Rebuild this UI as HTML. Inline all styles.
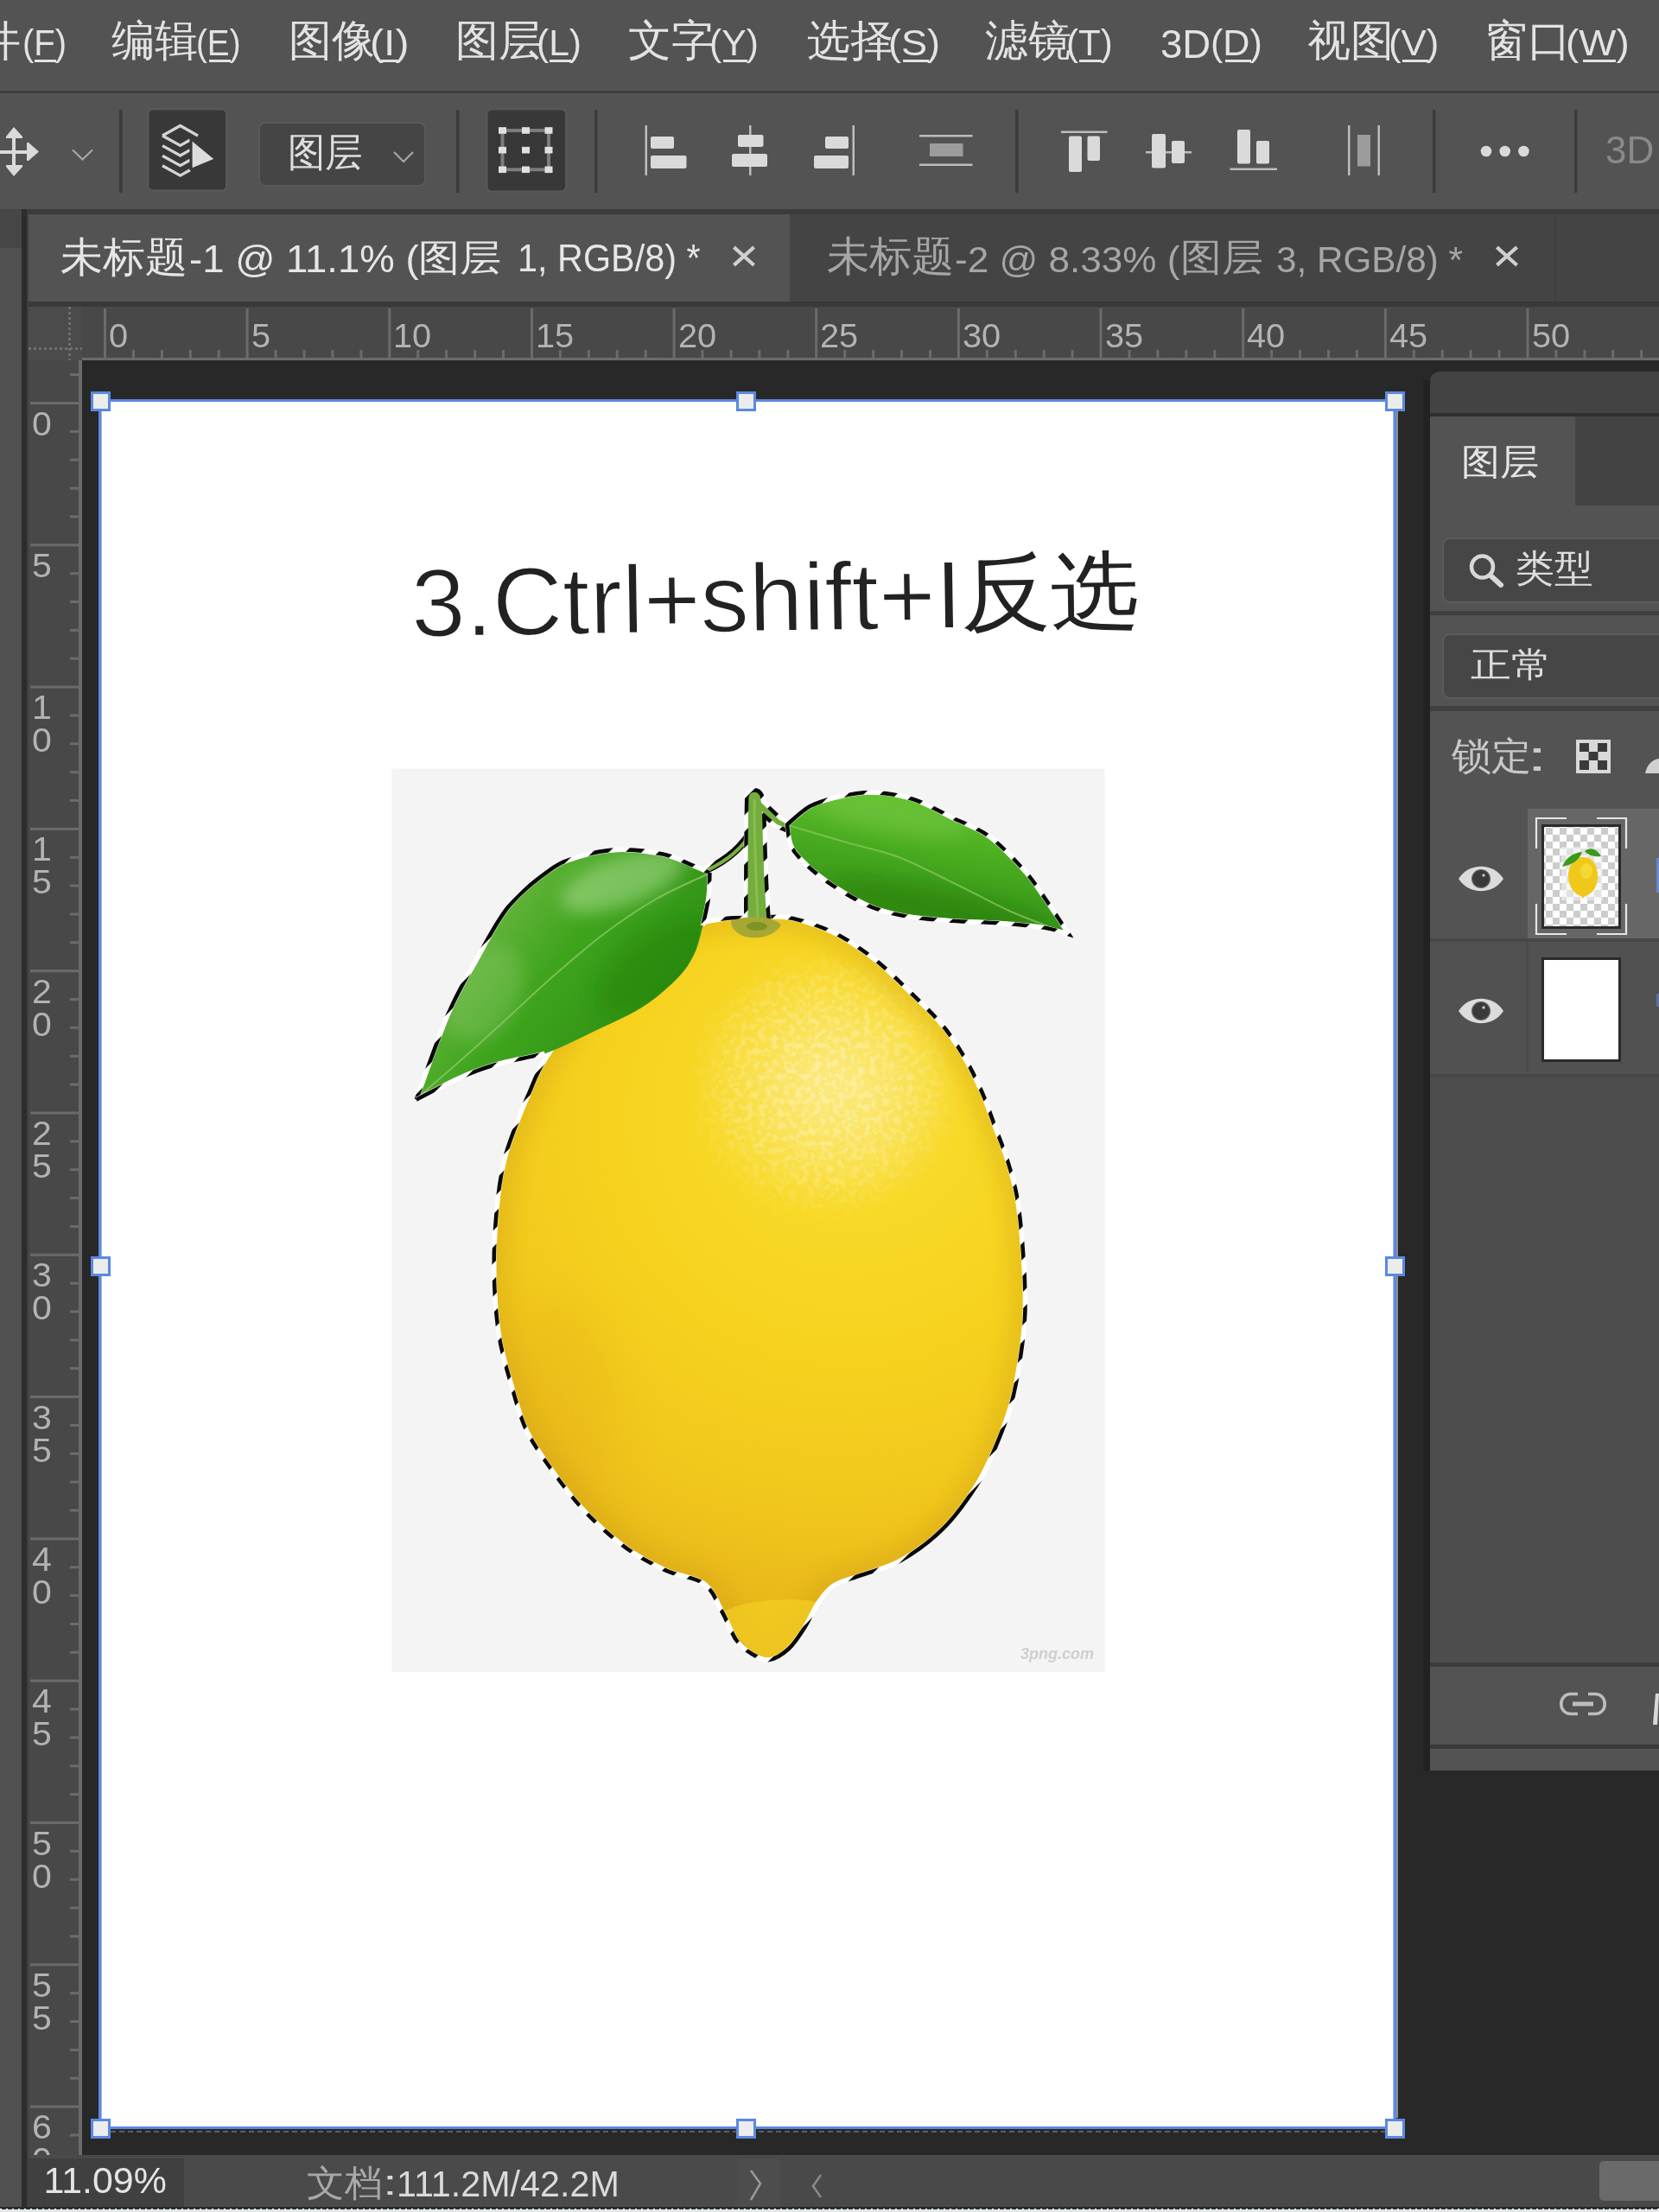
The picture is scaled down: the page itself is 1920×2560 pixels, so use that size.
<!DOCTYPE html>
<html><head><meta charset="utf-8">
<style>
*{margin:0;padding:0;box-sizing:border-box}
html,body{width:1920px;height:2560px;overflow:hidden;background:#535353;font-family:"Liberation Sans",sans-serif}
.a{position:absolute}
.t{position:absolute;white-space:nowrap;line-height:1;transform-origin:0 0}
svg{position:absolute;overflow:visible}
</style></head><body>
<!-- menu bar -->
<div class="a" style="left:0;top:105px;width:1920px;height:3px;background:#3f3f3f"></div>
<!-- tab bar -->
<div class="a" style="left:25px;top:242px;width:1895px;height:6px;background:#3b3b3b"></div>
<div class="a" style="left:0;top:242px;width:25px;height:2313px;background:#505050"></div>
<div class="a" style="left:0;top:242px;width:25px;height:45px;background:#464646"></div>
<div class="a" style="left:25px;top:242px;width:6px;height:2313px;background:#2c2c2c"></div>
<div class="a" style="left:31px;top:248px;width:3px;height:2307px;background:#3e3e3e"></div>
<div class="a" style="left:33px;top:248px;width:1887px;height:101px;background:#444444"></div>
<div class="a" style="left:33px;top:248px;width:881px;height:101px;background:#535353"></div>
<div class="a" style="left:1799px;top:248px;width:2px;height:101px;background:#3f3f3f"></div>
<div class="a" style="left:33px;top:349px;width:1887px;height:6px;background:#393939"></div>
<!-- rulers bg -->
<div class="a" style="left:33px;top:355px;width:1887px;height:62px;background:#484848"></div>
<div class="a" style="left:95px;top:414px;width:1825px;height:3px;background:#6b6b6b"></div>
<div class="a" style="left:33px;top:417px;width:62px;height:2077px;background:#484848"></div>
<div class="a" style="left:91px;top:417px;width:4px;height:2077px;background:#6b6b6b"></div>
<div class="a" style="left:33px;top:355px;width:62px;height:62px;background:#4b4b4b"></div>
<div class="a" style="left:79px;top:355px;width:3px;height:62px;background:repeating-linear-gradient(#6e6e6e 0 3px,transparent 3px 6px)"></div>
<div class="a" style="left:33px;top:402px;width:62px;height:3px;background:repeating-linear-gradient(90deg,#6e6e6e 0 3px,transparent 3px 6px)"></div>
<!-- canvas -->
<div class="a" style="left:95px;top:417px;width:1825px;height:2077px;background:#282828"></div>

<svg class="close-x" style="left:0;top:0" width="1920" height="400" viewBox="0 0 1920 400">
<g stroke="#d0d0d0" stroke-width="4.2" stroke-linecap="square">
<path d="M851 287.5 L871 305.5 M871 287.5 L851 305.5"/>
<path d="M1734 287.5 L1754 305.5 M1754 287.5 L1734 305.5"/>
</g></svg>

<svg style="left:0;top:0" width="1920" height="245" viewBox="0 0 1920 245">
<g fill="#dadada"><rect x="14" y="155" width="4" height="42"/><rect x="-5" y="174" width="40" height="4"/><path d="M16 147 L7 158 L7 160 L26 160 L26 158 Z"/><path d="M16 204 L7 193 L7 191 L26 191 L26 193 Z"/><path d="M45 175.5 L33 165 L31 165 L31 186 L33 186 Z"/></g>
<path d="M84 173.5 L95.5 184.5 L107 173.5" fill="none" stroke="#a8a8a8" stroke-width="2.2"/>
<rect x="138" y="127" width="3.5" height="96" fill="#3b3b3b"/>
<rect x="528" y="127" width="3.5" height="96" fill="#3b3b3b"/>
<rect x="688" y="127" width="3.5" height="96" fill="#3b3b3b"/>
<rect x="1175" y="127" width="3.5" height="96" fill="#3b3b3b"/>
<rect x="1658" y="127" width="3.5" height="96" fill="#3b3b3b"/>
<rect x="1822" y="127" width="3.5" height="96" fill="#3b3b3b"/>
<rect x="171" y="126" width="91.5" height="95" rx="6" fill="#383838" stroke="#575757" stroke-width="3"/>
<g fill="none" stroke="#d4d4d4" stroke-width="3.3" stroke-linejoin="miter">
<path d="M188 157 L208.6 145.5 L229 157"/>
<path d="M188 157.0 L208.6 168.4 L220 162.0"/>
<path d="M188 168.6 L208.6 180.0 L220 173.6"/>
<path d="M188 180.2 L208.6 191.6 L220 185.2"/>
<path d="M188 191.8 L208.6 203.2 L220 196.8"/>
</g>
<path d="M222.4 163.6 L247.2 184 L222.4 194.3 Z" fill="#dcdcdc"/>
<rect x="219.5" y="160" width="2.8" height="37" fill="#383838"/>
<rect x="300" y="142" width="192" height="73" rx="7" fill="#454545" stroke="#595959" stroke-width="2"/>
<path d="M456 176 L467 187 L478 176" fill="none" stroke="#a8a8a8" stroke-width="2.2"/>
<rect x="563" y="126" width="92.5" height="96" rx="6" fill="#383838" stroke="#575757" stroke-width="3"/>
<rect x="581.5" y="151" width="53.5" height="45.3" fill="none" stroke="#7c7c7c" stroke-width="4"/>
<rect x="577.0" y="147.2" width="9" height="7.6" fill="#e0e0e0"/>
<rect x="577.0" y="169.9" width="9" height="7.6" fill="#e0e0e0"/>
<rect x="577.0" y="192.5" width="9" height="7.6" fill="#e0e0e0"/>
<rect x="604.0" y="147.2" width="9" height="7.6" fill="#e0e0e0"/>
<rect x="604.0" y="169.9" width="9" height="7.6" fill="#e0e0e0"/>
<rect x="604.0" y="192.5" width="9" height="7.6" fill="#e0e0e0"/>
<rect x="630.5" y="147.2" width="9" height="7.6" fill="#e0e0e0"/>
<rect x="630.5" y="169.9" width="9" height="7.6" fill="#e0e0e0"/>
<rect x="630.5" y="192.5" width="9" height="7.6" fill="#e0e0e0"/>
<g fill="#dadada">
<rect x="746.5" y="145" width="2.5" height="58" fill="#bdbdbd"/>
<rect x="753" y="158" width="27" height="14" rx="2"/><rect x="753" y="180" width="41.5" height="15" rx="2"/>
<rect x="867" y="145" width="2.5" height="58" fill="#bdbdbd"/>
<rect x="854" y="156" width="29.5" height="14" rx="2"/><rect x="847" y="178" width="41" height="15" rx="2"/>
<rect x="986.5" y="145" width="2.5" height="58" fill="#bdbdbd"/>
<rect x="955" y="158" width="27" height="14" rx="2"/><rect x="942" y="180" width="40" height="15" rx="2"/>
<rect x="1064" y="156" width="61.5" height="2.5" fill="#bdbdbd"/><rect x="1064" y="189.5" width="61.5" height="2.5" fill="#bdbdbd"/>
<rect x="1076" y="166" width="38.5" height="15" fill="#9c9c9c"/>
<rect x="1228" y="151.5" width="53.5" height="2.5" fill="#bdbdbd"/>
<rect x="1237" y="157.5" width="15" height="41.5" rx="2"/><rect x="1258.5" y="157.5" width="14.5" height="28.5" rx="2"/>
<rect x="1326" y="175" width="53" height="2.5" fill="#bdbdbd"/>
<rect x="1333" y="155" width="16" height="39.5" rx="2"/><rect x="1356" y="163" width="15" height="26" rx="2"/>
<rect x="1423.5" y="194.5" width="54.5" height="2.5" fill="#bdbdbd"/>
<rect x="1432" y="150" width="15" height="39.5" rx="2"/><rect x="1454" y="163" width="15" height="26.5" rx="2"/>
<rect x="1560" y="145" width="2.5" height="58" fill="#bdbdbd"/><rect x="1594.5" y="145" width="2.5" height="58" fill="#bdbdbd"/>
<rect x="1571" y="156" width="15" height="36.5" fill="#9c9c9c"/>
<circle cx="1720" cy="175" r="6.3"/>
<circle cx="1741.7" cy="175" r="6.3"/>
<circle cx="1763.4" cy="175" r="6.3"/>
</g>
</svg>
<svg style="left:0;top:0" width="1920" height="2560" viewBox="0 0 1920 2560">
<g fill="#6b6b6b">
<rect x="120.0" y="357" width="3" height="58"/>
<rect x="152.9" y="405" width="3" height="10"/>
<rect x="185.9" y="405" width="3" height="10"/>
<rect x="218.8" y="405" width="3" height="10"/>
<rect x="251.7" y="405" width="3" height="10"/>
<rect x="284.6" y="357" width="3" height="58"/>
<rect x="317.6" y="405" width="3" height="10"/>
<rect x="350.5" y="405" width="3" height="10"/>
<rect x="383.4" y="405" width="3" height="10"/>
<rect x="416.4" y="405" width="3" height="10"/>
<rect x="449.3" y="357" width="3" height="58"/>
<rect x="482.2" y="405" width="3" height="10"/>
<rect x="515.2" y="405" width="3" height="10"/>
<rect x="548.1" y="405" width="3" height="10"/>
<rect x="581.0" y="405" width="3" height="10"/>
<rect x="614.0" y="357" width="3" height="58"/>
<rect x="646.9" y="405" width="3" height="10"/>
<rect x="679.8" y="405" width="3" height="10"/>
<rect x="712.7" y="405" width="3" height="10"/>
<rect x="745.7" y="405" width="3" height="10"/>
<rect x="778.6" y="357" width="3" height="58"/>
<rect x="811.5" y="405" width="3" height="10"/>
<rect x="844.5" y="405" width="3" height="10"/>
<rect x="877.4" y="405" width="3" height="10"/>
<rect x="910.3" y="405" width="3" height="10"/>
<rect x="943.2" y="357" width="3" height="58"/>
<rect x="976.2" y="405" width="3" height="10"/>
<rect x="1009.1" y="405" width="3" height="10"/>
<rect x="1042.0" y="405" width="3" height="10"/>
<rect x="1075.0" y="405" width="3" height="10"/>
<rect x="1107.9" y="357" width="3" height="58"/>
<rect x="1140.8" y="405" width="3" height="10"/>
<rect x="1173.8" y="405" width="3" height="10"/>
<rect x="1206.7" y="405" width="3" height="10"/>
<rect x="1239.6" y="405" width="3" height="10"/>
<rect x="1272.5" y="357" width="3" height="58"/>
<rect x="1305.5" y="405" width="3" height="10"/>
<rect x="1338.4" y="405" width="3" height="10"/>
<rect x="1371.3" y="405" width="3" height="10"/>
<rect x="1404.3" y="405" width="3" height="10"/>
<rect x="1437.2" y="357" width="3" height="58"/>
<rect x="1470.1" y="405" width="3" height="10"/>
<rect x="1503.1" y="405" width="3" height="10"/>
<rect x="1536.0" y="405" width="3" height="10"/>
<rect x="1568.9" y="405" width="3" height="10"/>
<rect x="1601.9" y="357" width="3" height="58"/>
<rect x="1634.8" y="405" width="3" height="10"/>
<rect x="1667.7" y="405" width="3" height="10"/>
<rect x="1700.6" y="405" width="3" height="10"/>
<rect x="1733.6" y="405" width="3" height="10"/>
<rect x="1766.5" y="357" width="3" height="58"/>
<rect x="1799.4" y="405" width="3" height="10"/>
<rect x="1832.4" y="405" width="3" height="10"/>
<rect x="1865.3" y="405" width="3" height="10"/>
<rect x="1898.2" y="405" width="3" height="10"/>
<rect x="81" y="432.1" width="11" height="3"/>
<rect x="35" y="465.0" width="57" height="3"/>
<rect x="81" y="497.9" width="11" height="3"/>
<rect x="81" y="530.7" width="11" height="3"/>
<rect x="81" y="563.6" width="11" height="3"/>
<rect x="81" y="596.4" width="11" height="3"/>
<rect x="35" y="629.3" width="57" height="3"/>
<rect x="81" y="662.2" width="11" height="3"/>
<rect x="81" y="695.0" width="11" height="3"/>
<rect x="81" y="727.9" width="11" height="3"/>
<rect x="81" y="760.7" width="11" height="3"/>
<rect x="35" y="793.6" width="57" height="3"/>
<rect x="81" y="826.5" width="11" height="3"/>
<rect x="81" y="859.3" width="11" height="3"/>
<rect x="81" y="892.2" width="11" height="3"/>
<rect x="81" y="925.0" width="11" height="3"/>
<rect x="35" y="957.9" width="57" height="3"/>
<rect x="81" y="990.8" width="11" height="3"/>
<rect x="81" y="1023.6" width="11" height="3"/>
<rect x="81" y="1056.5" width="11" height="3"/>
<rect x="81" y="1089.3" width="11" height="3"/>
<rect x="35" y="1122.2" width="57" height="3"/>
<rect x="81" y="1155.1" width="11" height="3"/>
<rect x="81" y="1187.9" width="11" height="3"/>
<rect x="81" y="1220.8" width="11" height="3"/>
<rect x="81" y="1253.6" width="11" height="3"/>
<rect x="35" y="1286.5" width="57" height="3"/>
<rect x="81" y="1319.4" width="11" height="3"/>
<rect x="81" y="1352.2" width="11" height="3"/>
<rect x="81" y="1385.1" width="11" height="3"/>
<rect x="81" y="1417.9" width="11" height="3"/>
<rect x="35" y="1450.8" width="57" height="3"/>
<rect x="81" y="1483.7" width="11" height="3"/>
<rect x="81" y="1516.5" width="11" height="3"/>
<rect x="81" y="1549.4" width="11" height="3"/>
<rect x="81" y="1582.2" width="11" height="3"/>
<rect x="35" y="1615.1" width="57" height="3"/>
<rect x="81" y="1648.0" width="11" height="3"/>
<rect x="81" y="1680.8" width="11" height="3"/>
<rect x="81" y="1713.7" width="11" height="3"/>
<rect x="81" y="1746.5" width="11" height="3"/>
<rect x="35" y="1779.4" width="57" height="3"/>
<rect x="81" y="1812.3" width="11" height="3"/>
<rect x="81" y="1845.1" width="11" height="3"/>
<rect x="81" y="1878.0" width="11" height="3"/>
<rect x="81" y="1910.8" width="11" height="3"/>
<rect x="35" y="1943.7" width="57" height="3"/>
<rect x="81" y="1976.6" width="11" height="3"/>
<rect x="81" y="2009.4" width="11" height="3"/>
<rect x="81" y="2042.3" width="11" height="3"/>
<rect x="81" y="2075.1" width="11" height="3"/>
<rect x="35" y="2108.0" width="57" height="3"/>
<rect x="81" y="2140.9" width="11" height="3"/>
<rect x="81" y="2173.7" width="11" height="3"/>
<rect x="81" y="2206.6" width="11" height="3"/>
<rect x="81" y="2239.4" width="11" height="3"/>
<rect x="35" y="2272.3" width="57" height="3"/>
<rect x="81" y="2305.2" width="11" height="3"/>
<rect x="81" y="2338.0" width="11" height="3"/>
<rect x="81" y="2370.9" width="11" height="3"/>
<rect x="81" y="2403.7" width="11" height="3"/>
<rect x="35" y="2436.6" width="57" height="3"/>
<rect x="81" y="2469.5" width="11" height="3"/>
</g></svg>
<div class="t" style="left:126.0px;top:369px;font-size:39px;color:#b3b3b3;transform:scaleX(1.02)">0</div>
<div class="t" style="left:290.6px;top:369px;font-size:39px;color:#b3b3b3;transform:scaleX(1.02)">5</div>
<div class="t" style="left:455.3px;top:369px;font-size:39px;color:#b3b3b3;transform:scaleX(1.02)">10</div>
<div class="t" style="left:620.0px;top:369px;font-size:39px;color:#b3b3b3;transform:scaleX(1.02)">15</div>
<div class="t" style="left:784.6px;top:369px;font-size:39px;color:#b3b3b3;transform:scaleX(1.02)">20</div>
<div class="t" style="left:949.2px;top:369px;font-size:39px;color:#b3b3b3;transform:scaleX(1.02)">25</div>
<div class="t" style="left:1113.9px;top:369px;font-size:39px;color:#b3b3b3;transform:scaleX(1.02)">30</div>
<div class="t" style="left:1278.5px;top:369px;font-size:39px;color:#b3b3b3;transform:scaleX(1.02)">35</div>
<div class="t" style="left:1443.2px;top:369px;font-size:39px;color:#b3b3b3;transform:scaleX(1.02)">40</div>
<div class="t" style="left:1607.9px;top:369px;font-size:39px;color:#b3b3b3;transform:scaleX(1.02)">45</div>
<div class="t" style="left:1772.5px;top:369px;font-size:39px;color:#b3b3b3;transform:scaleX(1.02)">50</div>
<div class="t" style="left:37px;top:471.5px;font-size:38px;color:#b3b3b3;transform:scaleX(1.08)">0</div>
<div class="t" style="left:37px;top:635.8px;font-size:38px;color:#b3b3b3;transform:scaleX(1.08)">5</div>
<div class="t" style="left:37px;top:800.1px;font-size:38px;color:#b3b3b3;transform:scaleX(1.08)">1</div>
<div class="t" style="left:37px;top:838.1px;font-size:38px;color:#b3b3b3;transform:scaleX(1.08)">0</div>
<div class="t" style="left:37px;top:964.4px;font-size:38px;color:#b3b3b3;transform:scaleX(1.08)">1</div>
<div class="t" style="left:37px;top:1002.4px;font-size:38px;color:#b3b3b3;transform:scaleX(1.08)">5</div>
<div class="t" style="left:37px;top:1128.7px;font-size:38px;color:#b3b3b3;transform:scaleX(1.08)">2</div>
<div class="t" style="left:37px;top:1166.7px;font-size:38px;color:#b3b3b3;transform:scaleX(1.08)">0</div>
<div class="t" style="left:37px;top:1293.0px;font-size:38px;color:#b3b3b3;transform:scaleX(1.08)">2</div>
<div class="t" style="left:37px;top:1331.0px;font-size:38px;color:#b3b3b3;transform:scaleX(1.08)">5</div>
<div class="t" style="left:37px;top:1457.3px;font-size:38px;color:#b3b3b3;transform:scaleX(1.08)">3</div>
<div class="t" style="left:37px;top:1495.3px;font-size:38px;color:#b3b3b3;transform:scaleX(1.08)">0</div>
<div class="t" style="left:37px;top:1621.6px;font-size:38px;color:#b3b3b3;transform:scaleX(1.08)">3</div>
<div class="t" style="left:37px;top:1659.6px;font-size:38px;color:#b3b3b3;transform:scaleX(1.08)">5</div>
<div class="t" style="left:37px;top:1785.9px;font-size:38px;color:#b3b3b3;transform:scaleX(1.08)">4</div>
<div class="t" style="left:37px;top:1823.9px;font-size:38px;color:#b3b3b3;transform:scaleX(1.08)">0</div>
<div class="t" style="left:37px;top:1950.2px;font-size:38px;color:#b3b3b3;transform:scaleX(1.08)">4</div>
<div class="t" style="left:37px;top:1988.2px;font-size:38px;color:#b3b3b3;transform:scaleX(1.08)">5</div>
<div class="t" style="left:37px;top:2114.5px;font-size:38px;color:#b3b3b3;transform:scaleX(1.08)">5</div>
<div class="t" style="left:37px;top:2152.5px;font-size:38px;color:#b3b3b3;transform:scaleX(1.08)">0</div>
<div class="t" style="left:37px;top:2278.8px;font-size:38px;color:#b3b3b3;transform:scaleX(1.08)">5</div>
<div class="t" style="left:37px;top:2316.8px;font-size:38px;color:#b3b3b3;transform:scaleX(1.08)">5</div>
<div class="t" style="left:37px;top:2443.1px;font-size:38px;color:#b3b3b3;transform:scaleX(1.08)">6</div>
<div class="t" style="left:37px;top:2481.1px;font-size:38px;color:#b3b3b3;transform:scaleX(1.08)">0</div>
<div class="a" style="left:114px;top:462px;width:1502px;height:2002px;background:#5a89e0"></div>
<div class="a" style="left:117px;top:465px;width:1496px;height:1996px;background:#9bbaf0"></div>
<div class="a" style="left:118px;top:465px;width:1494px;height:1996px;background:#ffffff"></div>
<div class="a" style="left:118px;top:2466px;width:1485px;height:2px;background:repeating-linear-gradient(90deg,#5e5e5e 0 6px,transparent 6px 10px)"></div>
<div class="a" style="left:1616px;top:476px;width:2px;height:1975px;background:#8e8e8e"></div>
<div class="a" style="left:104.5px;top:452.5px;width:23px;height:23px;background:#ececec;border:3px solid #5a89e0"></div>
<div class="a" style="left:104.5px;top:1453.5px;width:23px;height:23px;background:#ececec;border:3px solid #5a89e0"></div>
<div class="a" style="left:104.5px;top:2451.5px;width:23px;height:23px;background:#ececec;border:3px solid #5a89e0"></div>
<div class="a" style="left:852.0px;top:452.5px;width:23px;height:23px;background:#ececec;border:3px solid #5a89e0"></div>
<div class="a" style="left:852.0px;top:2451.5px;width:23px;height:23px;background:#ececec;border:3px solid #5a89e0"></div>
<div class="a" style="left:1602.5px;top:452.5px;width:23px;height:23px;background:#ececec;border:3px solid #5a89e0"></div>
<div class="a" style="left:1602.5px;top:1453.5px;width:23px;height:23px;background:#ececec;border:3px solid #5a89e0"></div>
<div class="a" style="left:1602.5px;top:2451.5px;width:23px;height:23px;background:#ececec;border:3px solid #5a89e0"></div>

<div class="a" style="left:0;top:0;width:1920px;height:2560px;transform:rotate(-0.9deg);transform-origin:899px 695px">
<div class="t" id="doc1" style="left:476.22px;top:636.22px;font-size:111.48px;color:#222222;transform:scaleX(1.0094);-webkit-text-stroke:1.6px #ffffff;">3.Ctrl+shift+I</div><div class="t" id="doc2" style="left:1113.06px;top:641.49px;font-size:98.73px;color:#222222;transform:scaleX(1.0408);">反选</div>
</div>
<svg style="left:0;top:0" width="1920" height="2560" viewBox="0 0 1920 2560">
<defs>
<radialGradient id="lg" cx="960" cy="1330" r="560" fx="1000" fy="1260" gradientUnits="userSpaceOnUse">
<stop offset="0" stop-color="#fae04e"/><stop offset="0.22" stop-color="#f8d928"/><stop offset="0.5" stop-color="#f6d21e"/>
<stop offset="0.78" stop-color="#f1c61c"/><stop offset="1" stop-color="#e6b41a"/></radialGradient>
<radialGradient id="lg2" cx="955" cy="1255" r="150" gradientUnits="userSpaceOnUse">
<stop offset="0" stop-color="#fdf0a0" stop-opacity="0.6"/><stop offset="1" stop-color="#fdf3b0" stop-opacity="0"/></radialGradient>
<linearGradient id="gl" x1="560" y1="1040" x2="760" y2="1190" gradientUnits="userSpaceOnUse">
<stop offset="0" stop-color="#6cb842"/><stop offset="0.45" stop-color="#3ea41c"/><stop offset="1" stop-color="#2e8f14"/></linearGradient>
<linearGradient id="gr" x1="1050" y1="925" x2="1030" y2="1060" gradientUnits="userSpaceOnUse">
<stop offset="0" stop-color="#5fc02a"/><stop offset="0.5" stop-color="#45a81e"/><stop offset="1" stop-color="#368f16"/></linearGradient>
<clipPath id="clipL"><path d="M481.8 1272.6 C487.8 1256.3 506.8 1201.3 518.0 1175.0 C529.2 1148.7 537.3 1135.9 549.0 1115.0 C560.7 1094.1 573.5 1067.8 588.0 1049.8 C602.5 1031.8 622.0 1017.0 635.7 1007.3 C649.4 997.6 656.7 995.4 670.0 991.4 C683.3 987.4 698.9 983.8 715.3 983.4 C731.7 983.0 753.7 985.7 768.3 988.8 C782.9 991.9 793.9 998.5 802.8 1002.0 C811.6 1005.5 818.3 1008.7 821.4 1010.0 C821.2 1014.8 821.3 1028.8 820.0 1039.0 C818.7 1049.2 816.3 1059.9 813.4 1071.0 C810.5 1082.1 808.1 1094.9 802.8 1105.5 C797.5 1116.1 791.8 1124.4 781.6 1134.6 C771.4 1144.8 757.3 1156.8 741.8 1166.5 C726.3 1176.2 707.3 1184.2 688.7 1193.0 C670.1 1201.8 649.5 1213.0 630.4 1219.5 C611.3 1226.0 590.2 1227.4 574.0 1232.0 C557.8 1236.6 548.4 1240.2 533.0 1247.0 C517.6 1253.8 490.3 1268.3 481.8 1272.6Z"/></clipPath>
<clipPath id="clipR"><path d="M911.0 954.3 C915.4 950.8 927.8 938.3 937.5 933.0 C947.2 927.7 957.5 925.1 969.4 922.4 C981.3 919.7 994.4 916.6 1009.0 917.0 C1023.6 917.4 1041.5 920.1 1057.0 925.0 C1072.5 929.9 1087.3 939.1 1102.0 946.3 C1116.7 953.5 1131.0 957.7 1145.0 968.0 C1159.0 978.3 1175.0 995.7 1186.0 1008.0 C1197.0 1020.3 1202.5 1029.7 1211.0 1042.0 C1219.5 1054.3 1232.9 1075.0 1237.3 1081.6 C1232.4 1080.3 1221.7 1075.8 1208.0 1073.6 C1194.3 1071.4 1172.7 1069.6 1155.0 1068.3 C1137.3 1067.0 1119.7 1067.0 1102.0 1065.7 C1084.3 1064.4 1064.5 1063.1 1049.0 1060.4 C1033.5 1057.8 1022.3 1055.1 1009.0 1049.8 C995.7 1044.5 981.3 1036.0 969.4 1028.5 C957.5 1021.0 946.4 1012.7 937.5 1004.7 C928.6 996.8 920.7 989.2 916.3 980.8 C911.9 972.4 911.9 958.7 911.0 954.3Z"/></clipPath>
<clipPath id="clipB"><path d="M876.0 1062.0 C886.8 1061.7 896.1 1060.3 905.0 1061.0 C913.9 1061.7 918.9 1062.6 929.6 1066.0 C940.3 1069.4 955.2 1073.9 969.4 1081.6 C983.5 1089.3 1001.2 1101.6 1014.5 1112.0 C1027.8 1122.4 1036.6 1132.0 1049.0 1144.0 C1061.4 1156.0 1077.7 1171.0 1088.7 1184.0 C1099.8 1197.0 1107.3 1208.7 1115.3 1222.0 C1123.3 1235.3 1130.4 1250.2 1136.5 1264.0 C1142.6 1277.8 1147.2 1292.3 1152.0 1305.0 C1156.8 1317.7 1160.8 1326.7 1165.0 1340.0 C1169.2 1353.3 1173.8 1366.8 1177.0 1385.0 C1180.2 1403.2 1182.4 1427.0 1184.0 1449.0 C1185.6 1471.0 1186.9 1496.7 1186.4 1517.0 C1185.9 1537.3 1183.7 1552.9 1181.0 1571.0 C1178.3 1589.1 1175.2 1607.7 1170.2 1625.4 C1165.2 1643.1 1158.0 1661.2 1151.2 1677.0 C1144.4 1692.8 1139.5 1704.9 1129.5 1720.3 C1119.5 1735.7 1106.0 1754.9 1091.5 1769.2 C1077.0 1783.5 1058.5 1797.0 1042.7 1806.0 C1026.9 1815.0 1009.6 1818.2 996.6 1823.0 C983.6 1827.8 973.3 1829.7 965.0 1835.0 C956.7 1840.3 952.7 1846.8 947.0 1855.0 C941.3 1863.2 936.7 1875.2 931.0 1884.0 C925.3 1892.8 919.8 1901.8 913.0 1908.0 C906.2 1914.2 897.2 1920.0 890.0 1921.0 C882.8 1922.0 876.3 1917.8 870.0 1914.0 C863.7 1910.2 857.7 1906.0 852.0 1898.0 C846.3 1890.0 842.2 1876.8 836.0 1866.0 C829.8 1855.2 825.8 1841.0 815.0 1833.0 C804.2 1825.0 786.4 1824.7 771.4 1817.8 C756.4 1810.9 740.5 1802.9 725.1 1791.8 C709.7 1780.7 692.8 1765.8 678.8 1751.3 C664.8 1736.8 652.8 1720.9 641.2 1705.0 C629.6 1689.1 617.6 1672.7 609.4 1655.8 C601.2 1638.9 597.3 1622.0 592.0 1603.7 C586.7 1585.4 581.0 1567.6 577.6 1545.9 C574.2 1524.2 572.3 1497.7 571.8 1473.6 C571.3 1449.5 572.8 1422.9 574.7 1401.2 C576.6 1379.5 579.5 1360.3 583.4 1343.4 C587.3 1326.5 593.3 1312.6 597.9 1300.0 C602.5 1287.4 605.3 1280.7 611.0 1268.0 C616.7 1255.3 620.5 1242.0 632.0 1224.0 C643.5 1206.0 662.0 1179.8 680.0 1160.0 C698.0 1140.2 720.0 1119.7 740.0 1105.0 C760.0 1090.3 783.3 1079.0 800.0 1072.0 C816.7 1065.0 827.3 1064.7 840.0 1063.0 C852.7 1061.3 865.2 1062.3 876.0 1062.0Z"/></clipPath>
<filter id="blur8" x="-50%" y="-50%" width="200%" height="200%"><feGaussianBlur stdDeviation="10"/></filter>
<filter id="blur20" x="-50%" y="-50%" width="200%" height="200%"><feGaussianBlur stdDeviation="25"/></filter>
<filter id="tex" x="0" y="0" width="100%" height="100%"><feTurbulence type="fractalNoise" baseFrequency="0.14" numOctaves="2" seed="7"/>
<feColorMatrix values="0 0 0 0 1  0 0 0 0 0.96  0 0 0 0 0.72  0 0 0 -3.5 2.0"/></filter>
<radialGradient id="texmask" cx="955" cy="1255" r="165" gradientUnits="userSpaceOnUse"><stop offset="0" stop-color="#fff" stop-opacity="0.9"/><stop offset="0.6" stop-color="#fff" stop-opacity="0.5"/><stop offset="1" stop-color="#fff" stop-opacity="0"/></radialGradient>
<mask id="tm"><rect x="800" y="1040" width="420" height="400" fill="url(#texmask)"/></mask>
<pattern id="ants" x="0" y="0" width="38" height="38" patternUnits="userSpaceOnUse">
<rect width="38" height="38" fill="#ffffff"/><path d="M0 0 L19 0 L0 19 Z M38 0 L38 19 L19 38 L0 38 Z" fill="#0a0a0a"/></pattern>
</defs>
<rect x="453.5" y="889.5" width="825" height="1045.5" fill="#f4f4f4"/>
<path d="M876.0 1062.0 C886.8 1061.7 896.1 1060.3 905.0 1061.0 C913.9 1061.7 918.9 1062.6 929.6 1066.0 C940.3 1069.4 955.2 1073.9 969.4 1081.6 C983.5 1089.3 1001.2 1101.6 1014.5 1112.0 C1027.8 1122.4 1036.6 1132.0 1049.0 1144.0 C1061.4 1156.0 1077.7 1171.0 1088.7 1184.0 C1099.8 1197.0 1107.3 1208.7 1115.3 1222.0 C1123.3 1235.3 1130.4 1250.2 1136.5 1264.0 C1142.6 1277.8 1147.2 1292.3 1152.0 1305.0 C1156.8 1317.7 1160.8 1326.7 1165.0 1340.0 C1169.2 1353.3 1173.8 1366.8 1177.0 1385.0 C1180.2 1403.2 1182.4 1427.0 1184.0 1449.0 C1185.6 1471.0 1186.9 1496.7 1186.4 1517.0 C1185.9 1537.3 1183.7 1552.9 1181.0 1571.0 C1178.3 1589.1 1175.2 1607.7 1170.2 1625.4 C1165.2 1643.1 1158.0 1661.2 1151.2 1677.0 C1144.4 1692.8 1139.5 1704.9 1129.5 1720.3 C1119.5 1735.7 1106.0 1754.9 1091.5 1769.2 C1077.0 1783.5 1058.5 1797.0 1042.7 1806.0 C1026.9 1815.0 1009.6 1818.2 996.6 1823.0 C983.6 1827.8 973.3 1829.7 965.0 1835.0 C956.7 1840.3 952.7 1846.8 947.0 1855.0 C941.3 1863.2 936.7 1875.2 931.0 1884.0 C925.3 1892.8 919.8 1901.8 913.0 1908.0 C906.2 1914.2 897.2 1920.0 890.0 1921.0 C882.8 1922.0 876.3 1917.8 870.0 1914.0 C863.7 1910.2 857.7 1906.0 852.0 1898.0 C846.3 1890.0 842.2 1876.8 836.0 1866.0 C829.8 1855.2 825.8 1841.0 815.0 1833.0 C804.2 1825.0 786.4 1824.7 771.4 1817.8 C756.4 1810.9 740.5 1802.9 725.1 1791.8 C709.7 1780.7 692.8 1765.8 678.8 1751.3 C664.8 1736.8 652.8 1720.9 641.2 1705.0 C629.6 1689.1 617.6 1672.7 609.4 1655.8 C601.2 1638.9 597.3 1622.0 592.0 1603.7 C586.7 1585.4 581.0 1567.6 577.6 1545.9 C574.2 1524.2 572.3 1497.7 571.8 1473.6 C571.3 1449.5 572.8 1422.9 574.7 1401.2 C576.6 1379.5 579.5 1360.3 583.4 1343.4 C587.3 1326.5 593.3 1312.6 597.9 1300.0 C602.5 1287.4 605.3 1280.7 611.0 1268.0 C616.7 1255.3 620.5 1242.0 632.0 1224.0 C643.5 1206.0 662.0 1179.8 680.0 1160.0 C698.0 1140.2 720.0 1119.7 740.0 1105.0 C760.0 1090.3 783.3 1079.0 800.0 1072.0 C816.7 1065.0 827.3 1064.7 840.0 1063.0 C852.7 1061.3 865.2 1062.3 876.0 1062.0Z" fill="url(#lg)"/>
<path d="M876.0 1062.0 C886.8 1061.7 896.1 1060.3 905.0 1061.0 C913.9 1061.7 918.9 1062.6 929.6 1066.0 C940.3 1069.4 955.2 1073.9 969.4 1081.6 C983.5 1089.3 1001.2 1101.6 1014.5 1112.0 C1027.8 1122.4 1036.6 1132.0 1049.0 1144.0 C1061.4 1156.0 1077.7 1171.0 1088.7 1184.0 C1099.8 1197.0 1107.3 1208.7 1115.3 1222.0 C1123.3 1235.3 1130.4 1250.2 1136.5 1264.0 C1142.6 1277.8 1147.2 1292.3 1152.0 1305.0 C1156.8 1317.7 1160.8 1326.7 1165.0 1340.0 C1169.2 1353.3 1173.8 1366.8 1177.0 1385.0 C1180.2 1403.2 1182.4 1427.0 1184.0 1449.0 C1185.6 1471.0 1186.9 1496.7 1186.4 1517.0 C1185.9 1537.3 1183.7 1552.9 1181.0 1571.0 C1178.3 1589.1 1175.2 1607.7 1170.2 1625.4 C1165.2 1643.1 1158.0 1661.2 1151.2 1677.0 C1144.4 1692.8 1139.5 1704.9 1129.5 1720.3 C1119.5 1735.7 1106.0 1754.9 1091.5 1769.2 C1077.0 1783.5 1058.5 1797.0 1042.7 1806.0 C1026.9 1815.0 1009.6 1818.2 996.6 1823.0 C983.6 1827.8 973.3 1829.7 965.0 1835.0 C956.7 1840.3 952.7 1846.8 947.0 1855.0 C941.3 1863.2 936.7 1875.2 931.0 1884.0 C925.3 1892.8 919.8 1901.8 913.0 1908.0 C906.2 1914.2 897.2 1920.0 890.0 1921.0 C882.8 1922.0 876.3 1917.8 870.0 1914.0 C863.7 1910.2 857.7 1906.0 852.0 1898.0 C846.3 1890.0 842.2 1876.8 836.0 1866.0 C829.8 1855.2 825.8 1841.0 815.0 1833.0 C804.2 1825.0 786.4 1824.7 771.4 1817.8 C756.4 1810.9 740.5 1802.9 725.1 1791.8 C709.7 1780.7 692.8 1765.8 678.8 1751.3 C664.8 1736.8 652.8 1720.9 641.2 1705.0 C629.6 1689.1 617.6 1672.7 609.4 1655.8 C601.2 1638.9 597.3 1622.0 592.0 1603.7 C586.7 1585.4 581.0 1567.6 577.6 1545.9 C574.2 1524.2 572.3 1497.7 571.8 1473.6 C571.3 1449.5 572.8 1422.9 574.7 1401.2 C576.6 1379.5 579.5 1360.3 583.4 1343.4 C587.3 1326.5 593.3 1312.6 597.9 1300.0 C602.5 1287.4 605.3 1280.7 611.0 1268.0 C616.7 1255.3 620.5 1242.0 632.0 1224.0 C643.5 1206.0 662.0 1179.8 680.0 1160.0 C698.0 1140.2 720.0 1119.7 740.0 1105.0 C760.0 1090.3 783.3 1079.0 800.0 1072.0 C816.7 1065.0 827.3 1064.7 840.0 1063.0 C852.7 1061.3 865.2 1062.3 876.0 1062.0Z" fill="url(#lg2)"/>
<g clip-path="url(#clipB)"><rect x="800" y="1040" width="420" height="400" filter="url(#tex)" mask="url(#tm)" opacity="0.55"/>
<ellipse cx="640" cy="1640" rx="70" ry="130" fill="#e0a818" opacity="0.25" filter="url(#blur20)"/>
<path d="M876.0 1062.0 C886.8 1061.7 896.1 1060.3 905.0 1061.0 C913.9 1061.7 918.9 1062.6 929.6 1066.0 C940.3 1069.4 955.2 1073.9 969.4 1081.6 C983.5 1089.3 1001.2 1101.6 1014.5 1112.0 C1027.8 1122.4 1036.6 1132.0 1049.0 1144.0 C1061.4 1156.0 1077.7 1171.0 1088.7 1184.0 C1099.8 1197.0 1107.3 1208.7 1115.3 1222.0 C1123.3 1235.3 1130.4 1250.2 1136.5 1264.0 C1142.6 1277.8 1147.2 1292.3 1152.0 1305.0 C1156.8 1317.7 1160.8 1326.7 1165.0 1340.0 C1169.2 1353.3 1173.8 1366.8 1177.0 1385.0 C1180.2 1403.2 1182.4 1427.0 1184.0 1449.0 C1185.6 1471.0 1186.9 1496.7 1186.4 1517.0 C1185.9 1537.3 1183.7 1552.9 1181.0 1571.0 C1178.3 1589.1 1175.2 1607.7 1170.2 1625.4 C1165.2 1643.1 1158.0 1661.2 1151.2 1677.0 C1144.4 1692.8 1139.5 1704.9 1129.5 1720.3 C1119.5 1735.7 1106.0 1754.9 1091.5 1769.2 C1077.0 1783.5 1058.5 1797.0 1042.7 1806.0 C1026.9 1815.0 1009.6 1818.2 996.6 1823.0 C983.6 1827.8 973.3 1829.7 965.0 1835.0 C956.7 1840.3 952.7 1846.8 947.0 1855.0 C941.3 1863.2 936.7 1875.2 931.0 1884.0 C925.3 1892.8 919.8 1901.8 913.0 1908.0 C906.2 1914.2 897.2 1920.0 890.0 1921.0 C882.8 1922.0 876.3 1917.8 870.0 1914.0 C863.7 1910.2 857.7 1906.0 852.0 1898.0 C846.3 1890.0 842.2 1876.8 836.0 1866.0 C829.8 1855.2 825.8 1841.0 815.0 1833.0 C804.2 1825.0 786.4 1824.7 771.4 1817.8 C756.4 1810.9 740.5 1802.9 725.1 1791.8 C709.7 1780.7 692.8 1765.8 678.8 1751.3 C664.8 1736.8 652.8 1720.9 641.2 1705.0 C629.6 1689.1 617.6 1672.7 609.4 1655.8 C601.2 1638.9 597.3 1622.0 592.0 1603.7 C586.7 1585.4 581.0 1567.6 577.6 1545.9 C574.2 1524.2 572.3 1497.7 571.8 1473.6 C571.3 1449.5 572.8 1422.9 574.7 1401.2 C576.6 1379.5 579.5 1360.3 583.4 1343.4 C587.3 1326.5 593.3 1312.6 597.9 1300.0 C602.5 1287.4 605.3 1280.7 611.0 1268.0 C616.7 1255.3 620.5 1242.0 632.0 1224.0 C643.5 1206.0 662.0 1179.8 680.0 1160.0 C698.0 1140.2 720.0 1119.7 740.0 1105.0 C760.0 1090.3 783.3 1079.0 800.0 1072.0 C816.7 1065.0 827.3 1064.7 840.0 1063.0 C852.7 1061.3 865.2 1062.3 876.0 1062.0Z" fill="none" stroke="#c99c12" stroke-width="36" opacity="0.28" filter="url(#blur8)"/></g>
<path d="M836 1866 C860 1850 930 1848 947 1855 C935 1880 920 1905 890 1921 C868 1913 850 1895 836 1866Z" fill="#f3cf22" opacity="0.7"/>
<path d="M876.0 1062.0 C886.8 1061.7 896.1 1060.3 905.0 1061.0 C913.9 1061.7 918.9 1062.6 929.6 1066.0 C940.3 1069.4 955.2 1073.9 969.4 1081.6 C983.5 1089.3 1001.2 1101.6 1014.5 1112.0 C1027.8 1122.4 1036.6 1132.0 1049.0 1144.0 C1061.4 1156.0 1077.7 1171.0 1088.7 1184.0 C1099.8 1197.0 1107.3 1208.7 1115.3 1222.0 C1123.3 1235.3 1130.4 1250.2 1136.5 1264.0 C1142.6 1277.8 1147.2 1292.3 1152.0 1305.0 C1156.8 1317.7 1160.8 1326.7 1165.0 1340.0 C1169.2 1353.3 1173.8 1366.8 1177.0 1385.0 C1180.2 1403.2 1182.4 1427.0 1184.0 1449.0 C1185.6 1471.0 1186.9 1496.7 1186.4 1517.0 C1185.9 1537.3 1183.7 1552.9 1181.0 1571.0 C1178.3 1589.1 1175.2 1607.7 1170.2 1625.4 C1165.2 1643.1 1158.0 1661.2 1151.2 1677.0 C1144.4 1692.8 1139.5 1704.9 1129.5 1720.3 C1119.5 1735.7 1106.0 1754.9 1091.5 1769.2 C1077.0 1783.5 1058.5 1797.0 1042.7 1806.0 C1026.9 1815.0 1009.6 1818.2 996.6 1823.0 C983.6 1827.8 973.3 1829.7 965.0 1835.0 C956.7 1840.3 952.7 1846.8 947.0 1855.0 C941.3 1863.2 936.7 1875.2 931.0 1884.0 C925.3 1892.8 919.8 1901.8 913.0 1908.0 C906.2 1914.2 897.2 1920.0 890.0 1921.0 C882.8 1922.0 876.3 1917.8 870.0 1914.0 C863.7 1910.2 857.7 1906.0 852.0 1898.0 C846.3 1890.0 842.2 1876.8 836.0 1866.0 C829.8 1855.2 825.8 1841.0 815.0 1833.0 C804.2 1825.0 786.4 1824.7 771.4 1817.8 C756.4 1810.9 740.5 1802.9 725.1 1791.8 C709.7 1780.7 692.8 1765.8 678.8 1751.3 C664.8 1736.8 652.8 1720.9 641.2 1705.0 C629.6 1689.1 617.6 1672.7 609.4 1655.8 C601.2 1638.9 597.3 1622.0 592.0 1603.7 C586.7 1585.4 581.0 1567.6 577.6 1545.9 C574.2 1524.2 572.3 1497.7 571.8 1473.6 C571.3 1449.5 572.8 1422.9 574.7 1401.2 C576.6 1379.5 579.5 1360.3 583.4 1343.4 C587.3 1326.5 593.3 1312.6 597.9 1300.0 C602.5 1287.4 605.3 1280.7 611.0 1268.0 C616.7 1255.3 620.5 1242.0 632.0 1224.0 C643.5 1206.0 662.0 1179.8 680.0 1160.0 C698.0 1140.2 720.0 1119.7 740.0 1105.0 C760.0 1090.3 783.3 1079.0 800.0 1072.0 C816.7 1065.0 827.3 1064.7 840.0 1063.0 C852.7 1061.3 865.2 1062.3 876.0 1062.0Z" fill="none" stroke="#ffffff" stroke-width="5.5"/>
<path d="M876.0 1062.0 C886.8 1061.7 896.1 1060.3 905.0 1061.0 C913.9 1061.7 918.9 1062.6 929.6 1066.0 C940.3 1069.4 955.2 1073.9 969.4 1081.6 C983.5 1089.3 1001.2 1101.6 1014.5 1112.0 C1027.8 1122.4 1036.6 1132.0 1049.0 1144.0 C1061.4 1156.0 1077.7 1171.0 1088.7 1184.0 C1099.8 1197.0 1107.3 1208.7 1115.3 1222.0 C1123.3 1235.3 1130.4 1250.2 1136.5 1264.0 C1142.6 1277.8 1147.2 1292.3 1152.0 1305.0 C1156.8 1317.7 1160.8 1326.7 1165.0 1340.0 C1169.2 1353.3 1173.8 1366.8 1177.0 1385.0 C1180.2 1403.2 1182.4 1427.0 1184.0 1449.0 C1185.6 1471.0 1186.9 1496.7 1186.4 1517.0 C1185.9 1537.3 1183.7 1552.9 1181.0 1571.0 C1178.3 1589.1 1175.2 1607.7 1170.2 1625.4 C1165.2 1643.1 1158.0 1661.2 1151.2 1677.0 C1144.4 1692.8 1139.5 1704.9 1129.5 1720.3 C1119.5 1735.7 1106.0 1754.9 1091.5 1769.2 C1077.0 1783.5 1058.5 1797.0 1042.7 1806.0 C1026.9 1815.0 1009.6 1818.2 996.6 1823.0 C983.6 1827.8 973.3 1829.7 965.0 1835.0 C956.7 1840.3 952.7 1846.8 947.0 1855.0 C941.3 1863.2 936.7 1875.2 931.0 1884.0 C925.3 1892.8 919.8 1901.8 913.0 1908.0 C906.2 1914.2 897.2 1920.0 890.0 1921.0 C882.8 1922.0 876.3 1917.8 870.0 1914.0 C863.7 1910.2 857.7 1906.0 852.0 1898.0 C846.3 1890.0 842.2 1876.8 836.0 1866.0 C829.8 1855.2 825.8 1841.0 815.0 1833.0 C804.2 1825.0 786.4 1824.7 771.4 1817.8 C756.4 1810.9 740.5 1802.9 725.1 1791.8 C709.7 1780.7 692.8 1765.8 678.8 1751.3 C664.8 1736.8 652.8 1720.9 641.2 1705.0 C629.6 1689.1 617.6 1672.7 609.4 1655.8 C601.2 1638.9 597.3 1622.0 592.0 1603.7 C586.7 1585.4 581.0 1567.6 577.6 1545.9 C574.2 1524.2 572.3 1497.7 571.8 1473.6 C571.3 1449.5 572.8 1422.9 574.7 1401.2 C576.6 1379.5 579.5 1360.3 583.4 1343.4 C587.3 1326.5 593.3 1312.6 597.9 1300.0 C602.5 1287.4 605.3 1280.7 611.0 1268.0 C616.7 1255.3 620.5 1242.0 632.0 1224.0 C643.5 1206.0 662.0 1179.8 680.0 1160.0 C698.0 1140.2 720.0 1119.7 740.0 1105.0 C760.0 1090.3 783.3 1079.0 800.0 1072.0 C816.7 1065.0 827.3 1064.7 840.0 1063.0 C852.7 1061.3 865.2 1062.3 876.0 1062.0Z" fill="none" stroke="url(#ants)" stroke-width="4.6"/>
<path d="M867 966 C855 984 835 1000 809 1010" fill="none" stroke="url(#ants)" stroke-width="9"/>
<path d="M867 968 C855 985 835 1001 809 1011" fill="none" stroke="#78b040" stroke-width="4"/>
<path d="M865.5 1064 C865.5 1010 865.5 960 866.5 923 C867 916 876 914 879.5 921 L881 929 L902 949 L914 955.5 L910 958.5 L899 954 L882 939 C883 980 884.5 1030 887.5 1064 Z" fill="none" stroke="#ffffff" stroke-width="10"/>
<path d="M865.5 1064 C865.5 1010 865.5 960 866.5 923 C867 916 876 914 879.5 921 L881 929 L902 949 L914 955.5 L910 958.5 L899 954 L882 939 C883 980 884.5 1030 887.5 1064 Z" fill="none" stroke="url(#ants)" stroke-width="9"/>
<path d="M865.5 1064 C865.5 1010 865.5 960 866.5 923 C867 916 876 914 879.5 921 L881 929 L902 949 L914 955.5 L910 958.5 L899 954 L882 939 C883 980 884.5 1030 887.5 1064 Z" fill="#72ad3e"/>
<path d="M873 925 C873 970 875 1020 877 1062" stroke="#a0d060" stroke-width="3" fill="none" opacity="0.5"/>
<path d="M846 1066 C860 1060 892 1058 904 1070 C898 1082 880 1088 862 1084 C852 1080 846 1074 846 1066Z" fill="#a6a834"/>
<ellipse cx="876" cy="1072" rx="12" ry="5" fill="#7e9226"/>
<path d="M481.8 1272.6 C487.8 1256.3 506.8 1201.3 518.0 1175.0 C529.2 1148.7 537.3 1135.9 549.0 1115.0 C560.7 1094.1 573.5 1067.8 588.0 1049.8 C602.5 1031.8 622.0 1017.0 635.7 1007.3 C649.4 997.6 656.7 995.4 670.0 991.4 C683.3 987.4 698.9 983.8 715.3 983.4 C731.7 983.0 753.7 985.7 768.3 988.8 C782.9 991.9 793.9 998.5 802.8 1002.0 C811.6 1005.5 818.3 1008.7 821.4 1010.0 C821.2 1014.8 821.3 1028.8 820.0 1039.0 C818.7 1049.2 816.3 1059.9 813.4 1071.0 C810.5 1082.1 808.1 1094.9 802.8 1105.5 C797.5 1116.1 791.8 1124.4 781.6 1134.6 C771.4 1144.8 757.3 1156.8 741.8 1166.5 C726.3 1176.2 707.3 1184.2 688.7 1193.0 C670.1 1201.8 649.5 1213.0 630.4 1219.5 C611.3 1226.0 590.2 1227.4 574.0 1232.0 C557.8 1236.6 548.4 1240.2 533.0 1247.0 C517.6 1253.8 490.3 1268.3 481.8 1272.6Z" fill="url(#gl)"/>
<g clip-path="url(#clipL)" filter="url(#blur8)">
<ellipse cx="720" cy="1020" rx="75" ry="28" transform="rotate(-20 720 1020)" fill="#c8e8b0" opacity="0.45"/>
<ellipse cx="560" cy="1150" rx="40" ry="60" transform="rotate(30 560 1150)" fill="#90cc70" opacity="0.35"/>
<ellipse cx="760" cy="1120" rx="80" ry="40" transform="rotate(-35 760 1120)" fill="#1f7a0c" opacity="0.35"/>
</g>
<path d="M818.0 1012.0 C808.3 1016.7 779.7 1028.7 760.0 1040.0 C740.3 1051.3 720.0 1065.0 700.0 1080.0 C680.0 1095.0 660.0 1112.5 640.0 1130.0 C620.0 1147.5 598.3 1168.3 580.0 1185.0 C561.7 1201.7 545.7 1216.2 530.0 1230.0 C514.3 1243.8 493.3 1261.7 486.0 1268.0" fill="none" stroke="#8cc66a" stroke-width="2" opacity="0.8"/>
<path d="M481.8 1272.6 C487.8 1256.3 506.8 1201.3 518.0 1175.0 C529.2 1148.7 537.3 1135.9 549.0 1115.0 C560.7 1094.1 573.5 1067.8 588.0 1049.8 C602.5 1031.8 622.0 1017.0 635.7 1007.3 C649.4 997.6 656.7 995.4 670.0 991.4 C683.3 987.4 698.9 983.8 715.3 983.4 C731.7 983.0 753.7 985.7 768.3 988.8 C782.9 991.9 793.9 998.5 802.8 1002.0 C811.6 1005.5 818.3 1008.7 821.4 1010.0" fill="none" stroke="#ffffff" stroke-width="5.5"/>
<path d="M481.8 1272.6 C487.8 1256.3 506.8 1201.3 518.0 1175.0 C529.2 1148.7 537.3 1135.9 549.0 1115.0 C560.7 1094.1 573.5 1067.8 588.0 1049.8 C602.5 1031.8 622.0 1017.0 635.7 1007.3 C649.4 997.6 656.7 995.4 670.0 991.4 C683.3 987.4 698.9 983.8 715.3 983.4 C731.7 983.0 753.7 985.7 768.3 988.8 C782.9 991.9 793.9 998.5 802.8 1002.0 C811.6 1005.5 818.3 1008.7 821.4 1010.0" fill="none" stroke="url(#ants)" stroke-width="4.6"/>
<path d="M821.4 1010.0 C821.2 1014.8 821.3 1028.8 820.0 1039.0 C818.7 1049.2 814.5 1065.7 813.4 1071.0" fill="none" stroke="#ffffff" stroke-width="5.5"/>
<path d="M821.4 1010.0 C821.2 1014.8 821.3 1028.8 820.0 1039.0 C818.7 1049.2 814.5 1065.7 813.4 1071.0" fill="none" stroke="url(#ants)" stroke-width="4.6"/>
<path d="M630.4 1219.5 C621.0 1221.6 590.2 1227.4 574.0 1232.0 C557.8 1236.6 548.4 1240.2 533.0 1247.0 C517.6 1253.8 490.3 1268.3 481.8 1272.6" fill="none" stroke="#ffffff" stroke-width="5.5"/>
<path d="M630.4 1219.5 C621.0 1221.6 590.2 1227.4 574.0 1232.0 C557.8 1236.6 548.4 1240.2 533.0 1247.0 C517.6 1253.8 490.3 1268.3 481.8 1272.6" fill="none" stroke="url(#ants)" stroke-width="4.6"/>
<path d="M911.0 954.3 C915.4 950.8 927.8 938.3 937.5 933.0 C947.2 927.7 957.5 925.1 969.4 922.4 C981.3 919.7 994.4 916.6 1009.0 917.0 C1023.6 917.4 1041.5 920.1 1057.0 925.0 C1072.5 929.9 1087.3 939.1 1102.0 946.3 C1116.7 953.5 1131.0 957.7 1145.0 968.0 C1159.0 978.3 1175.0 995.7 1186.0 1008.0 C1197.0 1020.3 1202.5 1029.7 1211.0 1042.0 C1219.5 1054.3 1232.9 1075.0 1237.3 1081.6 C1232.4 1080.3 1221.7 1075.8 1208.0 1073.6 C1194.3 1071.4 1172.7 1069.6 1155.0 1068.3 C1137.3 1067.0 1119.7 1067.0 1102.0 1065.7 C1084.3 1064.4 1064.5 1063.1 1049.0 1060.4 C1033.5 1057.8 1022.3 1055.1 1009.0 1049.8 C995.7 1044.5 981.3 1036.0 969.4 1028.5 C957.5 1021.0 946.4 1012.7 937.5 1004.7 C928.6 996.8 920.7 989.2 916.3 980.8 C911.9 972.4 911.9 958.7 911.0 954.3Z" fill="url(#gr)"/>
<g clip-path="url(#clipR)" filter="url(#blur8)">
<ellipse cx="1090" cy="1050" rx="130" ry="22" transform="rotate(12 1090 1050)" fill="#1f720c" opacity="0.35"/>
<ellipse cx="1030" cy="945" rx="90" ry="20" transform="rotate(10 1030 945)" fill="#8fd060" opacity="0.3"/>
</g>
<path d="M912.0 955.0 C923.3 958.3 958.7 968.8 980.0 975.0 C1001.3 981.2 1018.3 983.7 1040.0 992.0 C1061.7 1000.3 1088.3 1014.5 1110.0 1025.0 C1131.7 1035.5 1149.3 1045.8 1170.0 1055.0 C1190.7 1064.2 1223.3 1075.8 1234.0 1080.0" fill="none" stroke="#86c25e" stroke-width="2" opacity="0.8"/>
<path d="M911.0 954.3 C915.4 950.8 927.8 938.3 937.5 933.0 C947.2 927.7 957.5 925.1 969.4 922.4 C981.3 919.7 994.4 916.6 1009.0 917.0 C1023.6 917.4 1041.5 920.1 1057.0 925.0 C1072.5 929.9 1087.3 939.1 1102.0 946.3 C1116.7 953.5 1131.0 957.7 1145.0 968.0 C1159.0 978.3 1175.0 995.7 1186.0 1008.0 C1197.0 1020.3 1202.5 1029.7 1211.0 1042.0 C1219.5 1054.3 1232.9 1075.0 1237.3 1081.6 C1232.4 1080.3 1221.7 1075.8 1208.0 1073.6 C1194.3 1071.4 1172.7 1069.6 1155.0 1068.3 C1137.3 1067.0 1119.7 1067.0 1102.0 1065.7 C1084.3 1064.4 1064.5 1063.1 1049.0 1060.4 C1033.5 1057.8 1022.3 1055.1 1009.0 1049.8 C995.7 1044.5 981.3 1036.0 969.4 1028.5 C957.5 1021.0 946.4 1012.7 937.5 1004.7 C928.6 996.8 920.7 989.2 916.3 980.8 C911.9 972.4 911.9 958.7 911.0 954.3Z" fill="none" stroke="#ffffff" stroke-width="5.5"/>
<path d="M911.0 954.3 C915.4 950.8 927.8 938.3 937.5 933.0 C947.2 927.7 957.5 925.1 969.4 922.4 C981.3 919.7 994.4 916.6 1009.0 917.0 C1023.6 917.4 1041.5 920.1 1057.0 925.0 C1072.5 929.9 1087.3 939.1 1102.0 946.3 C1116.7 953.5 1131.0 957.7 1145.0 968.0 C1159.0 978.3 1175.0 995.7 1186.0 1008.0 C1197.0 1020.3 1202.5 1029.7 1211.0 1042.0 C1219.5 1054.3 1232.9 1075.0 1237.3 1081.6 C1232.4 1080.3 1221.7 1075.8 1208.0 1073.6 C1194.3 1071.4 1172.7 1069.6 1155.0 1068.3 C1137.3 1067.0 1119.7 1067.0 1102.0 1065.7 C1084.3 1064.4 1064.5 1063.1 1049.0 1060.4 C1033.5 1057.8 1022.3 1055.1 1009.0 1049.8 C995.7 1044.5 981.3 1036.0 969.4 1028.5 C957.5 1021.0 946.4 1012.7 937.5 1004.7 C928.6 996.8 920.7 989.2 916.3 980.8 C911.9 972.4 911.9 958.7 911.0 954.3Z" fill="none" stroke="url(#ants)" stroke-width="4.6"/>
<text x="1181" y="1920" font-family="Liberation Sans" font-style="italic" font-weight="bold" font-size="18" fill="#cfcfcf" textLength="85" lengthAdjust="spacingAndGlyphs">3png.com</text>
</svg>
<div class="a" style="left:1647px;top:440px;width:10px;height:1609px;background:#222222"></div>
<div class="a" style="left:1655px;top:430px;width:265px;height:1619px;background:#535353;border-top-left-radius:12px"></div>
<div class="a" style="left:1655px;top:430px;width:265px;height:48px;background:#434343;border-top-left-radius:12px"></div>
<div class="a" style="left:1655px;top:478px;width:265px;height:4px;background:#2f2f2f"></div>
<div class="a" style="left:1823px;top:482px;width:97px;height:103px;background:#434343"></div>
<div class="a" style="left:1669px;top:622px;width:260px;height:76px;background:#464646;border:2px solid #5c5c5c;border-radius:9px"></div>
<div class="a" style="left:1655px;top:707px;width:265px;height:5px;background:#3f3f3f"></div>
<div class="a" style="left:1669px;top:733px;width:260px;height:76px;background:#464646;border:2px solid #5c5c5c;border-radius:9px"></div>
<div class="a" style="left:1655px;top:817px;width:265px;height:6px;background:#3f3f3f"></div>
<div class="a" style="left:1768px;top:936px;width:152px;height:150px;background:#666666"></div>
<div class="a" style="left:1655px;top:1086px;width:265px;height:4px;background:#474747"></div>
<div class="a" style="left:1655px;top:1090px;width:265px;height:153px;background:#515151"></div>
<div class="a" style="left:1767px;top:1090px;width:2px;height:153px;background:#4a4a4a"></div>
<div class="a" style="left:1655px;top:1243px;width:265px;height:4px;background:#474747"></div>
<div class="a" style="left:1655px;top:1247px;width:265px;height:677px;background:#4d4d4d"></div>
<div class="a" style="left:1655px;top:1924px;width:265px;height:5px;background:#3c3c3c"></div>
<div class="a" style="left:1655px;top:2019px;width:265px;height:5px;background:#393939"></div>
<svg style="left:0;top:0" width="1920" height="2560" viewBox="0 0 1920 2560">
<!-- search icon -->
<circle cx="1715.5" cy="656" r="12.5" fill="none" stroke="#d8d8d8" stroke-width="4.5"/>
<path d="M1725 666 L1737 677" stroke="#d8d8d8" stroke-width="6" stroke-linecap="round"/>
<!-- lock checker -->
<rect x="1824" y="856" width="40" height="39" fill="#d9d9d9"/>
<rect x="1828" y="860" width="11" height="10" fill="#3a3a3a"/>
<rect x="1849" y="860" width="11" height="10" fill="#3a3a3a"/>
<rect x="1838.5" y="870" width="11" height="10" fill="#3a3a3a"/>
<rect x="1828" y="880" width="11" height="11" fill="#3a3a3a"/>
<rect x="1849" y="880" width="11" height="11" fill="#3a3a3a"/>
<path d="M1904 895 C1906 885 1912 879 1920 878 L1920 895 Z" fill="#d0d0d0"/>
<!-- eyes -->
<g>
<path d="M1688 1017 C1700 998 1728 998 1740 1017 C1728 1036 1700 1036 1688 1017 Z" fill="#dcdcdc"/>
<circle cx="1714" cy="1017" r="10.5" fill="#3a3a3a" stroke="#6a6a6a" stroke-width="1.2"/>
<circle cx="1717" cy="1013" r="1.8" fill="#c0c0c0"/>
<path d="M1688 1170 C1700 1151 1728 1151 1740 1170 C1728 1189 1700 1189 1688 1170 Z" fill="#dcdcdc"/>
<circle cx="1714" cy="1170" r="10.5" fill="#3a3a3a" stroke="#6a6a6a" stroke-width="1.2"/>
<circle cx="1717" cy="1166" r="1.8" fill="#c0c0c0"/>
</g>
<!-- thumb 1 -->
<defs><pattern id="chk" x="1789" y="958" width="16" height="16" patternUnits="userSpaceOnUse">
<rect width="16" height="16" fill="#ffffff"/><rect width="8" height="8" fill="#cccccc"/><rect x="8" y="8" width="8" height="8" fill="#cccccc"/></pattern></defs>
<rect x="1785.5" y="955.5" width="89" height="118" fill="url(#chk)" stroke="#2a2a2a" stroke-width="3"/>
<rect x="1807" y="980" width="48" height="62" fill="#f2f2f2" opacity="0.55"/>
<path d="M1832 992 C1845 992 1850 1005 1849 1016 C1848 1030 1840 1036 1834 1037 L1832 1040 L1830 1037 C1822 1035 1815 1026 1815 1014 C1815 1002 1822 992 1832 992Z" fill="#f0c81c"/>
<ellipse cx="1836" cy="1008" rx="7" ry="9" fill="#f8dc3c" opacity="0.8"/>
<path d="M1808 1003 C1812 993 1820 987 1831 986 C1828 995 1820 1001 1808 1003Z" fill="#3a9a1c"/>
<path d="M1834 985 C1840 980 1848 982 1853 991 C1845 992 1838 990 1834 985Z" fill="#3a9a1c"/>
<g fill="none" stroke="#e6e6e6" stroke-width="2.2">
<path d="M1778 982 L1778 947 L1813 947"/><path d="M1848 947 L1882 947 L1882 982"/>
<path d="M1778 1046 L1778 1081 L1813 1081"/><path d="M1848 1081 L1882 1081 L1882 1046"/>
</g>
<rect x="1917" y="993" width="3" height="40" fill="#6a86d0"/>
<!-- thumb 2 -->
<rect x="1785.5" y="1109.5" width="89" height="118" fill="#ffffff" stroke="#2a2a2a" stroke-width="3"/>
<rect x="1917" y="1150" width="3" height="15" fill="#6a86d0" opacity="0.6"/>
<!-- link -->
<g fill="none" stroke="#bdbdbd" stroke-width="3.6">
<path d="M1826 1960.5 L1818 1960.5 C1803 1960.5 1803 1983.5 1818 1983.5 L1826 1983.5"/>
<path d="M1838 1960.5 L1846 1960.5 C1861 1960.5 1861 1983.5 1846 1983.5 L1838 1983.5"/>
</g>
<rect x="1820" y="1969.5" width="24" height="5" fill="#bdbdbd"/>
<path d="M1916 1960 L1920 1960 L1918 1996 L1913 1996 Z" fill="#d8d8d8"/>
</svg>

<div class="a" style="left:33px;top:2494px;width:1887px;height:61px;background:#4a4a4a"></div>
<div class="a" style="left:33px;top:2498px;width:180px;height:57px;background:#404040"></div>
<div class="a" style="left:853px;top:2498px;width:50px;height:57px;background:#4d4d4d"></div>
<div class="a" style="left:903px;top:2498px;width:1017px;height:57px;background:#494949"></div>
<div class="a" style="left:1851px;top:2501px;width:80px;height:46px;background:#6a6a6a;border-radius:5px"></div>
<svg style="left:860px;top:2505px" width="30" height="45"><path d="M9 7 L20 22 L9 41" fill="none" stroke="#9a9a9a" stroke-width="2.5"/></svg>
<svg style="left:930px;top:2505px" width="30" height="45"><path d="M20 12 L11 25 L20 38" fill="none" stroke="#8a8a8a" stroke-width="2.5"/></svg>
<div class="a" style="left:0;top:2554px;width:1920px;height:3px;background:#2a2a2a"></div>
<div class="a" style="left:0;top:2557px;width:1920px;height:3px;background:#e2e6e6"></div>
<div class="a" style="left:0;top:2556px;width:1920px;height:1px;background:repeating-linear-gradient(90deg,#ffffff 0 2px,transparent 2px 7px)"></div>

<div class="t" id="m0" style="left:-26.00px;top:22.00px;font-size:50.00px;color:#e3e3e3;">件</div>
<div class="t" id="m0l" style="left:25.66px;top:27.55px;font-size:42.93px;color:#e3e3e3;transform:scaleX(0.9329);">(F)</div>
<div class="t" id="m1" style="left:129.00px;top:22.00px;font-size:50.00px;color:#e3e3e3;">编辑</div>
<div class="t" id="m1l" style="left:227.22px;top:27.55px;font-size:42.93px;color:#e3e3e3;transform:scaleX(0.8999);">(E)</div>
<div class="t" id="m2" style="left:334.00px;top:22.00px;font-size:50.00px;color:#e3e3e3;">图像</div>
<div class="t" id="m2l" style="left:427.78px;top:27.55px;font-size:42.93px;color:#e3e3e3;transform:scaleX(1.1218);">(I)</div>
<div class="t" id="m3" style="left:527.00px;top:22.00px;font-size:50.00px;color:#e3e3e3;">图层</div>
<div class="t" id="m3l" style="left:621.04px;top:27.55px;font-size:42.93px;color:#e3e3e3;transform:scaleX(0.9917);">(L)</div>
<div class="t" id="m4" style="left:727.00px;top:22.00px;font-size:50.00px;color:#e3e3e3;">文字</div>
<div class="t" id="m4l" style="left:821.04px;top:27.55px;font-size:42.93px;color:#e3e3e3;transform:scaleX(0.9936);">(Y)</div>
<div class="t" id="m5" style="left:934.00px;top:22.00px;font-size:50.00px;color:#e3e3e3;">选择</div>
<div class="t" id="m5l" style="left:1027.93px;top:27.55px;font-size:42.93px;color:#e3e3e3;transform:scaleX(1.0498);">(S)</div>
<div class="t" id="m6" style="left:1139.50px;top:22.00px;font-size:50.00px;color:#e3e3e3;">滤镜</div>
<div class="t" id="m6l" style="left:1234.06px;top:27.55px;font-size:42.93px;color:#e3e3e3;transform:scaleX(0.9806);">(T)</div>
<div class="t" id="m7" style="left:1513.00px;top:22.00px;font-size:50.00px;color:#e3e3e3;">视图</div>
<div class="t" id="m7l" style="left:1606.98px;top:27.55px;font-size:42.93px;color:#e3e3e3;transform:scaleX(1.0217);">(V)</div>
<div class="t" id="m8" style="left:1718.00px;top:22.00px;font-size:50.00px;color:#e3e3e3;">窗口</div>
<div class="t" id="m8l" style="left:1811.89px;top:27.55px;font-size:42.93px;color:#e3e3e3;transform:scaleX(1.0660);">(W)</div>
<div class="t" id="m3d" style="left:1342.69px;top:27.50px;font-size:46.59px;color:#e3e3e3;transform:scaleX(0.9772);">3D</div>
<div class="t" id="m3dl" style="left:1401.01px;top:27.55px;font-size:42.93px;color:#e3e3e3;transform:scaleX(1.0051);">(D)</div>
<div class="t" id="tb_layer" style="left:333.14px;top:153.58px;font-size:45.93px;color:#dedede;transform:scaleX(0.9455);">图层</div>
<div class="t" id="tb_3d" style="left:1858.00px;top:152.00px;font-size:44.00px;color:#8a8a8a;">3D</div>
<div class="t" id="ta1" style="left:69.99px;top:273.40px;font-size:48.20px;color:#e6e6e6;transform:scaleX(1.0197);">未标题</div>
<div class="t" id="ta2" style="left:218.93px;top:278.00px;font-size:44.00px;color:#e6e6e6;transform:scaleX(1.0354);">-1 @ 11.1% (</div>
<div class="t" id="ta3" style="left:484.06px;top:276.61px;font-size:43.36px;color:#e6e6e6;transform:scaleX(1.1201);">图层</div>
<div class="t" id="ta4" style="left:599.08px;top:277.46px;font-size:44.05px;color:#e6e6e6;transform:scaleX(0.9396);">1, RGB/8) *</div>
<div class="t" id="ti1" style="left:956.98px;top:273.30px;font-size:48.00px;color:#a6a6a6;transform:scaleX(1.0250);">未标题</div>
<div class="t" id="ti2" style="left:1105.33px;top:279.09px;font-size:42.63px;color:#a6a6a6;transform:scaleX(1.0349);">-2 @ 8.33% (</div>
<div class="t" id="ti3" style="left:1366.13px;top:276.00px;font-size:44.00px;color:#a6a6a6;transform:scaleX(1.0905);">图层</div>
<div class="t" id="ti4" style="left:1476.97px;top:279.09px;font-size:42.63px;color:#a6a6a6;transform:scaleX(0.9909);">3, RGB/8) *</div>
<div class="t" id="p_tab" style="left:1690.69px;top:513.75px;font-size:42.19px;color:#e6e6e6;transform:scaleX(1.0735);">图层</div>
<div class="t" id="p_type" style="left:1754.49px;top:636.00px;font-size:44.00px;color:#dcdcdc;transform:scaleX(1.0176);">类型</div>
<div class="t" id="p_norm" style="left:1702.40px;top:748.50px;font-size:40.39px;color:#dcdcdc;transform:scaleX(1.1693);">正常</div>
<div class="t" id="p_lock" style="left:1679.70px;top:853.00px;font-size:43.85px;color:#c8c8c8;transform:scaleX(1.0541);">锁定</div>
<div class="t" id="p_lockc" style="left:1766.80px;top:852.00px;font-size:47.67px;color:#c8c8c8;transform:scaleX(1.8000);">:</div>
<div class="t" id="s_zoom" style="left:50.57px;top:2501.84px;font-size:42.89px;color:#e4e4e4;">11.09%</div>
<div class="t" id="s_doc" style="left:354.66px;top:2505.80px;font-size:41.95px;color:#a8a8a8;transform:scaleX(1.0407);">文档</div>
<div class="t" id="s_docc" style="left:442.50px;top:2507.00px;font-size:40.17px;color:#d8d8d8;transform:scaleX(1.5000);">:</div>
<div class="t" id="s_docv" style="left:458.86px;top:2507.05px;font-size:42.32px;color:#dadada;transform:scaleX(0.9757);">111.2M/42.2M</div>
<div class="a" style="left:39.7px;top:69.4px;width:25.4px;height:2.2px;background:#e3e3e3"></div>
<div class="a" style="left:241.5px;top:69.4px;width:25.9px;height:2.2px;background:#e3e3e3"></div>
<div class="a" style="left:440.7px;top:69.4px;width:22.1px;height:2.2px;background:#e3e3e3"></div>
<div class="a" style="left:635.5px;top:69.4px;width:25.9px;height:2.2px;background:#e3e3e3"></div>
<div class="a" style="left:836.8px;top:69.4px;width:28.6px;height:2.2px;background:#e3e3e3"></div>
<div class="a" style="left:1044.6px;top:69.4px;width:30.2px;height:2.2px;background:#e3e3e3"></div>
<div class="a" style="left:1248.8px;top:69.4px;width:26.7px;height:2.2px;background:#e3e3e3"></div>
<div class="a" style="left:1623.2px;top:69.4px;width:29.4px;height:2.2px;background:#e3e3e3"></div>
<div class="a" style="left:1832.1px;top:69.4px;width:37.5px;height:2.2px;background:#e3e3e3"></div>
<div class="a" style="left:1417.5px;top:69.4px;width:30.0px;height:2.2px;background:#e3e3e3"></div>
</body></html>
